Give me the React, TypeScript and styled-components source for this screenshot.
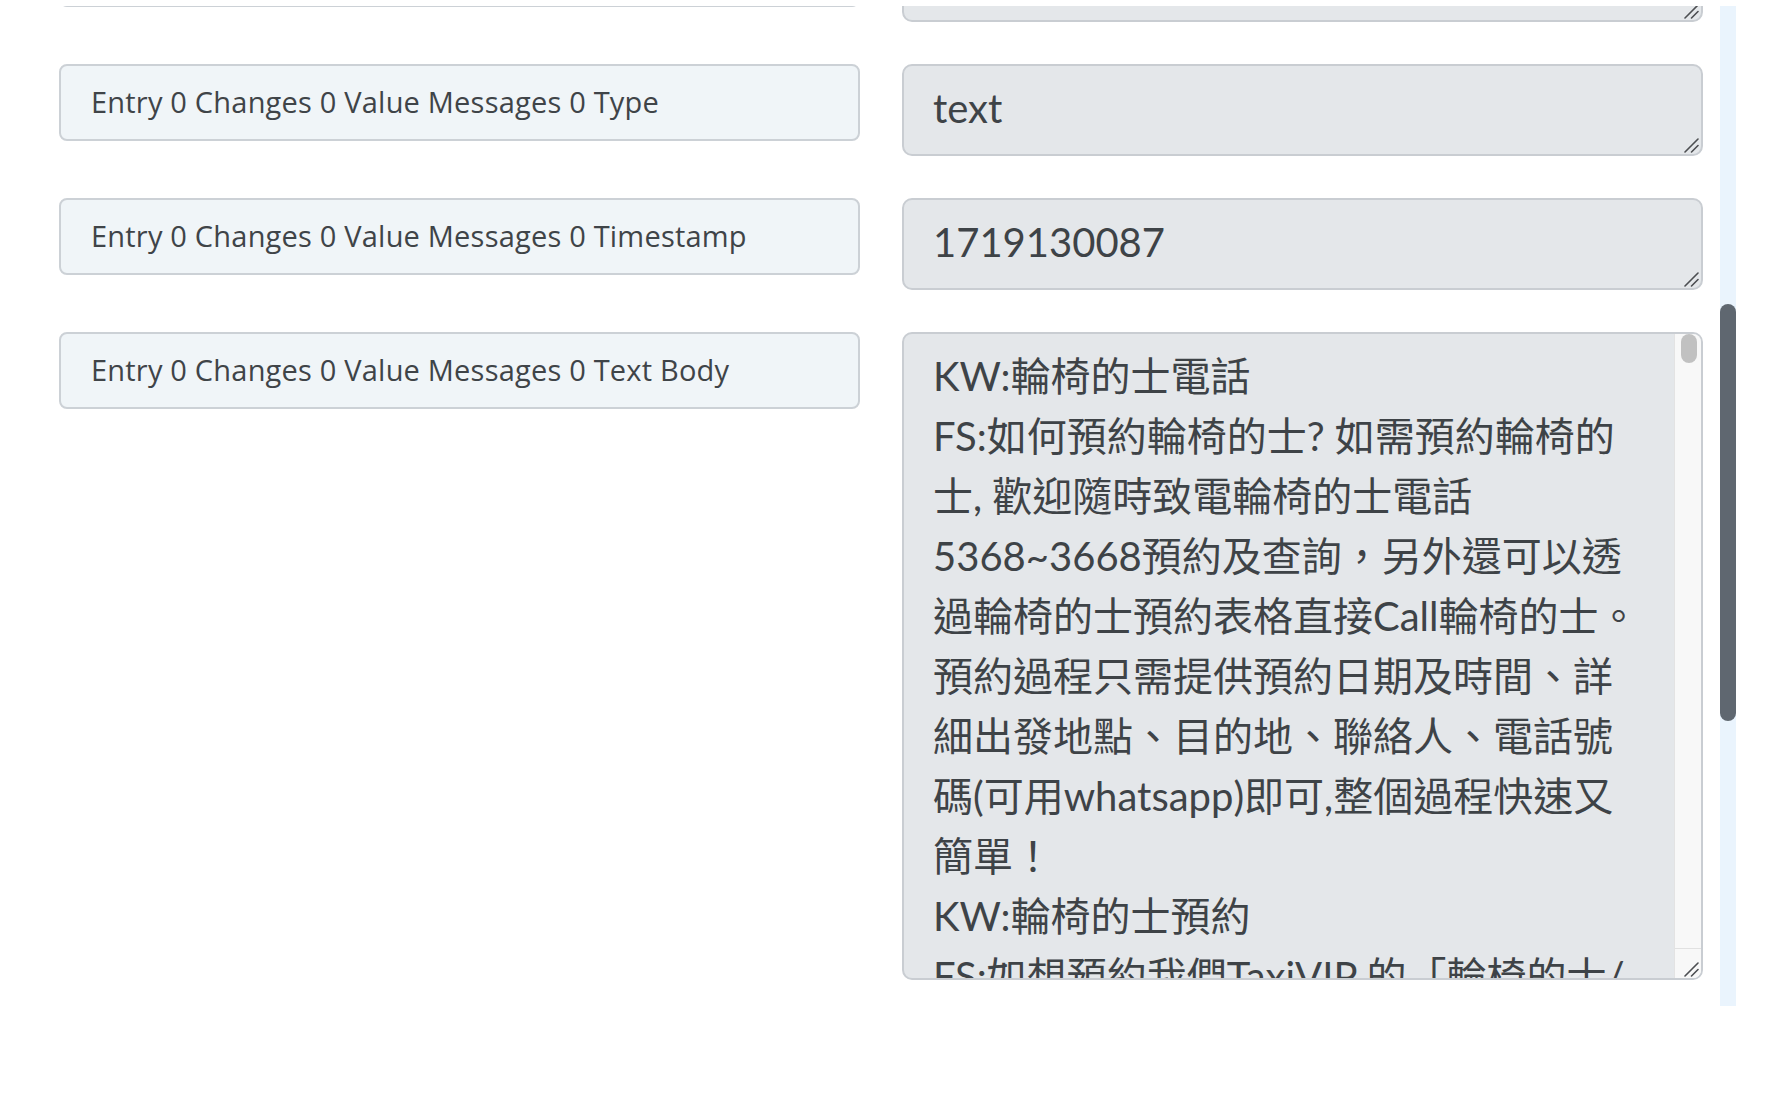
import React, { useLayoutEffect, useRef } from "react"
import styled, { createGlobalStyle } from "styled-components"

const GlobalStyle = createGlobalStyle`
  html, body {
    margin: 0;
    padding: 0;
    background: #ffffff;
  }
  * {
    box-sizing: border-box;
  }
`

// page panel: scrolled viewport plus its own scrollbar column
const Panel = styled.div`
  display: flex;
  margin-top: 6px;
  width: 1736px;
  height: 1000px;
`

const Viewport = styled.div`
  flex: 1;
  height: 100%;
  overflow: hidden;
`

const Track = styled.div`
  flex: 0 0 16px;
  height: 100%;
  background: #eaf4fd;
`

const Thumb = styled.div`
  width: 100%;
  border-radius: 8px;
  background: #5f6770;
`

const Form = styled.form`
  display: flex;
  flex-direction: column;
  gap: 42px;
  padding: 103px 17px 709px 59px;
`

const Row = styled.div`
  display: grid;
  grid-template-columns: 1fr 1fr;
  column-gap: 42px;
  align-items: start;
`

const Label = styled.label`
  display: flex;
  align-items: center;
  height: 77px;
  padding: 0 30px 3px;
  border: 2px solid #ccd1d6;
  border-radius: 8px;
  background: #f0f5f8;
  color: #3f4448;
  font-family: "Open Sans", Lato, sans-serif;
  font-size: 29px;
  letter-spacing: 0.2px;
  white-space: nowrap;
  overflow: hidden;
`

const FieldBox = styled.div<{ $tall?: boolean }>`
  position: relative;
  display: flex;
  height: ${(p) => (p.$tall ? "648px" : "92px")};
  border: 2px solid #c9cdd2;
  border-radius: 10px;
  background: #e4e7ea;
  overflow: hidden;
`

const Field = styled.textarea`
  flex: 1;
  min-width: 0;
  height: 100%;
  padding: 12px 30px 14px 29px;
  border: none;
  background: transparent;
  color: #3e4347;
  font-family: Lato, "Noto Sans CJK TC", sans-serif;
  font-size: 40px;
  line-height: 60px;
  resize: none;
  overflow: hidden;
  outline: none;
`

// inner scrollbar of the message body box
const BoxTrack = styled.div`
  flex: 0 0 27px;
  display: flex;
  flex-direction: column;
  background: #f8f8f8;
  border-left: 1px solid #e3e3e3;
`

const BoxThumb = styled.div`
  height: 29px;
  margin: 0 4px 0 6px;
  border-radius: 8px;
  background: #c1c1c1;
`

const BoxCorner = styled.div`
  margin-top: auto;
  height: 30px;
  border-top: 1px solid #e1e1e1;
  background: #f8f8f8;
`

const Grip = styled.svg`
  position: absolute;
  right: 2px;
  bottom: 1px;
  width: 15px;
  height: 15px;
`

const ResizeGrip = () => (
  <Grip viewBox="0 0 15 15">
    <path d="M1 14 L14 1 M7.5 14 L14 7.5" stroke="#4d4f52" strokeWidth="1.6" strokeLinecap="round" />
  </Grip>
)

const faq = [
  "KW:輪椅的士電話\nFS:如何預約輪椅的士? 如需預約輪椅的士, 歡迎隨時致電輪椅的士電話5368~3668預約及查詢，另外還可以透過輪椅的士預約表格直接Call輪椅的士。預約過程只需提供預約日期及時間、詳細出發地點、目的地、聯絡人、電話號碼(可用whatsapp)即可,整個過程快速又簡單！",
  "KW:輪椅的士預約\nFS:如想預約我們TaxiVIP 的「輪椅的士/復康的士」服務，可以透過電話、WhatsApp或網上預約表格預約，我們會盡快確認您的行程及車資。",
  "KW:輪椅的士收費\nFS:輪椅的士收費按行程距離及時間計算，市區單程收費由$250起，跨區或機場行程另有優惠套票，詳情歡迎致電查詢。",
  "KW:輪椅的士 機場\nFS:我們提供往返香港國際機場的輪椅的士服務，司機會協助乘客上落車及搬運行李，讓長者及行動不便人士安心出行。",
  "KW:輪椅的士 醫院\nFS:覆診、出院或轉院都可以預約輪椅的士，車廂設有升降台及安全固定裝置，輪椅使用者毋須離開輪椅即可上車。",
  "KW:復康的士\nFS:復康的士適合需要使用輪椅的乘客，每部車可載一部輪椅及最多三位同行人士，建議最少提前一日預約。",
]

const body = Array.from({ length: 8 }, () => faq.join("\n")).join("\n")

const rows = [
  { label: "Object", value: "whatsapp_business_account" },
  { label: "Entry 0 Id", value: "104532891276543" },
  { label: "Entry 0 Changes 0 Value Metadata Phone Number Id", value: "112233445566778" },
  { label: "Entry 0 Changes 0 Value Messages 0 From", value: "85298765432" },
  { label: "Entry 0 Changes 0 Value Messages 0 Id", value: "wamid.HBLLODUYOTE3NTU0MZIVAAISFDNBOTE" },
  { label: "Entry 0 Changes 0 Value Messages 0 Type", value: "text" },
  { label: "Entry 0 Changes 0 Value Messages 0 Timestamp", value: "1719130087" },
]

const SCROLL_TOP = 715
const CONTENT_HEIGHT = 2398
const VIEW_HEIGHT = 1000

export default function App() {
  const viewRef = useRef<HTMLDivElement>(null)

  useLayoutEffect(() => {
    if (viewRef.current) viewRef.current.scrollTop = SCROLL_TOP
  }, [])

  const thumbTop = (SCROLL_TOP / CONTENT_HEIGHT) * VIEW_HEIGHT
  const thumbHeight = (VIEW_HEIGHT / CONTENT_HEIGHT) * VIEW_HEIGHT

  return (
    <>
      <GlobalStyle />
      <Panel>
        <Viewport ref={viewRef}>
          <Form onSubmit={(e) => e.preventDefault()}>
            {rows.map((r) => (
              <Row key={r.label}>
                <Label>{r.label}</Label>
                <FieldBox>
                  <Field rows={1} defaultValue={r.value} spellCheck={false} />
                  <ResizeGrip />
                </FieldBox>
              </Row>
            ))}
            <Row>
              <Label>Entry 0 Changes 0 Value Messages 0 Text Body</Label>
              <FieldBox $tall>
                <Field defaultValue={body} spellCheck={false} />
                <BoxTrack>
                  <BoxThumb />
                  <BoxCorner />
                </BoxTrack>
                <ResizeGrip />
              </FieldBox>
            </Row>
          </Form>
        </Viewport>
        <Track>
          <Thumb style={{ marginTop: thumbTop, height: thumbHeight }} />
        </Track>
      </Panel>
    </>
  )
}
